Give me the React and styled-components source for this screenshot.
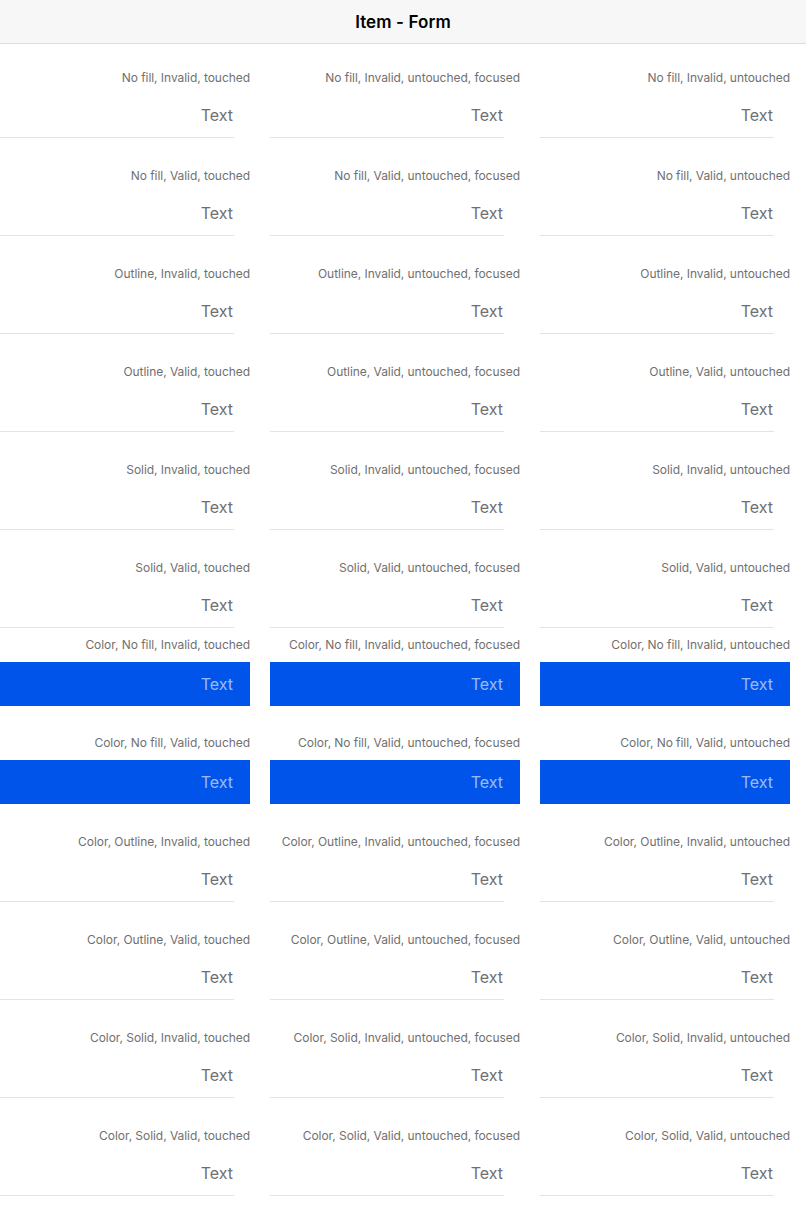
import React from 'react';
import styled, { createGlobalStyle } from 'styled-components';

const GlobalStyle = createGlobalStyle`
  html, body {
    margin: 0;
    padding: 0;
    background: #ffffff;
  }
  body {
    font-family: Inter, 'Noto Sans', 'Liberation Sans', sans-serif;
    -webkit-font-smoothing: antialiased;
  }
`;

const Page = styled.div`
  width: 806px;
  min-height: 1212px;
  background: #ffffff;
`;

const Toolbar = styled.header`
  height: 43px;
  display: flex;
  align-items: center;
  justify-content: center;
  background: #f7f7f7;
  border-bottom: 1px solid #dcdcdc;
`;

const Title = styled.h1`
  margin: 0;
  font-size: 17px;
  font-weight: 600;
  color: #000000;
  letter-spacing: 0.1px;
`;

const Content = styled.main`
  display: flex;
  flex-direction: column;
`;

const Row = styled.div`
  display: grid;
  grid-template-columns: repeat(3, 250px);
  column-gap: 20px;
  margin-top: ${(p) => p.$top}px;
`;

const Cell = styled.div`
  display: flex;
  flex-direction: column;
`;

const Label = styled.div`
  padding-top: 1px;
  font-size: 12px;
  line-height: 16px;
  color: #707070;
  text-align: right;
  white-space: nowrap;
  letter-spacing: -0.05px;
`;

const Item = styled.div`
  margin-top: ${(p) => (p.$color ? 9 : 7)}px;
  display: flex;
  background: ${(p) => (p.$color ? '#0054e9' : 'transparent')};
`;

const Inner = styled.div`
  flex: 1;
  margin-right: 16px;
  height: 44px;
  display: flex;
  align-items: center;
  justify-content: flex-end;
  border-bottom: ${(p) => (p.$color ? 'none' : '1px solid #e3e3e3')};
`;

const Value = styled.span`
  font-size: 16px;
  line-height: 20px;
  padding-right: 1px;
  color: ${(p) => (p.$color ? 'rgba(255, 255, 255, 0.62)' : '#707070')};
`;

const rows = [
  'No fill, Invalid',
  'No fill, Valid',
  'Outline, Invalid',
  'Outline, Valid',
  'Solid, Invalid',
  'Solid, Valid',
  'Color, No fill, Invalid',
  'Color, No fill, Valid',
  'Color, Outline, Invalid',
  'Color, Outline, Valid',
  'Color, Solid, Invalid',
  'Color, Solid, Valid',
];

const states = ['touched', 'untouched, focused', 'untouched'];

const isColored = (name) => name.startsWith('Color, No fill');

function topFor(index) {
  if (index === 0) return 25;
  const cur = isColored(rows[index]);
  const prev = isColored(rows[index - 1]);
  if (cur && !prev) return 8;
  if (cur && prev) return 28;
  return 29;
}

const FormItem = ({ label, colored }) => (
  <Cell>
    <Label>{label}</Label>
    <Item $color={colored}>
      <Inner $color={colored}>
        <Value $color={colored}>Text</Value>
      </Inner>
    </Item>
  </Cell>
);

export default function App() {
  return (
    <Page>
      <GlobalStyle />
      <Toolbar>
        <Title>Item - Form</Title>
      </Toolbar>
      <Content>
        {rows.map((name, i) => (
          <Row key={name} $top={topFor(i)}>
            {states.map((state) => (
              <FormItem
                key={state}
                label={`${name}, ${state}`}
                colored={isColored(name)}
              />
            ))}
          </Row>
        ))}
      </Content>
    </Page>
  );
}
